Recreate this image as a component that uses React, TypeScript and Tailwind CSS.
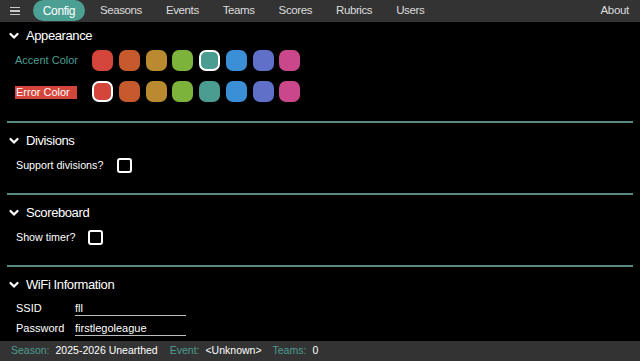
import React from "react";

const SW = ["#d4453b", "#c75a2d", "#b98a2f", "#7cb33b", "#4b9d91", "#3a8fd6", "#6070c9", "#c9478a"];

function Chevron() {
  return (
    <svg width="10" height="8" viewBox="0 0 10 8" className="shrink-0">
      <polyline points="1.5,2 5,5.6 8.5,2" fill="none" stroke="white" strokeWidth="2.2" strokeLinecap="round" strokeLinejoin="round" />
    </svg>
  );
}

function Header({ title, mt }: { title: string; mt: string }) {
  return (
    <div className={`flex items-center h-[18px] pl-[2px] gap-[7px] ${mt}`}>
      <Chevron />
      <span className="text-[13px] tracking-[-0.4px] text-white">{title}</span>
    </div>
  );
}

function Divider() {
  return <div className="mt-[18px] h-[2px] w-[626px] bg-[#5b8a80]" />;
}

function Swatches({ sel }: { sel: number }) {
  return (
    <div className="flex gap-[5.75px]">
      {SW.map((c, i) => (
        <div
          key={i}
          className={`w-[21px] h-[21px] rounded-[7px] ${i === sel ? "border-[2.5px] border-white" : ""}`}
          style={{ backgroundColor: c }}
        />
      ))}
    </div>
  );
}

function Check() {
  return <div className="w-[15px] h-[15px] rounded-[3px] border-2 border-white" />;
}

export default function App() {
  const nav = ["Seasons", "Events", "Teams", "Scores", "Rubrics", "Users"];
  return (
    <div className="flex flex-col h-[361px] w-[640px] bg-black overflow-hidden" style={{ fontFamily: '"Liberation Sans", Arial, sans-serif' }}>
      <nav className="flex items-center h-[22px] bg-[#333333] shrink-0">
        <div className="ml-[10px] w-[10px] flex flex-col gap-[2px]">
          <div className="h-[1.5px] bg-[#c8c8c8]" />
          <div className="h-[1.5px] bg-[#c8c8c8]" />
          <div className="h-[1.5px] bg-[#c8c8c8]" />
        </div>
        <div className="ml-[13px] h-[21px] w-[52px] self-start rounded-full bg-[#4c9f93] flex items-center justify-center text-white text-[12px] tracking-[-0.4px]">
          Config
        </div>
        <div className="flex ml-[15px] gap-[24px] text-[11.5px] tracking-[-0.4px] text-[#dcdcdc]">
          {nav.map((n) => (
            <span key={n}>{n}</span>
          ))}
        </div>
        <span className="ml-auto mr-[11px] text-[11.5px] tracking-[-0.3px] text-[#dcdcdc]">About</span>
      </nav>

      <main className="flex-1 px-[7px] overflow-hidden">
        <Header title="Appearance" mt="mt-[5px]" />
        <div className="flex items-center mt-[5px]">
          <span className="w-[85px] pl-[8px] text-[11px] text-[#4b9d91]">Accent Color</span>
          <Swatches sel={4} />
        </div>
        <div className="flex items-center mt-[8px]">
          <div className="w-[85px] pl-[8px]">
            <span className="inline-block w-[62px] bg-[#d4453b] text-white text-[11px] leading-[13px] pl-[1px]">Error Color</span>
          </div>
          <Swatches sel={0} />
        </div>
        <Divider />

        <Header title="Divisions" mt="mt-[9px]" />
        <div className="flex items-center h-[20px] mt-[5px] pl-[9px] gap-[14px]">
          <span className="text-[10.7px] text-white">Support divisions?</span>
          <Check />
        </div>
        <Divider />

        <Header title="Scoreboard" mt="mt-[9px]" />
        <div className="flex items-center h-[20px] mt-[5px] pl-[9px] gap-[13px]">
          <span className="text-[10.7px] text-white">Show timer?</span>
          <Check />
        </div>
        <Divider />

        <Header title="WiFi Information" mt="mt-[9px]" />
        <div className="flex items-center h-[20px] mt-[4px] pl-[9px]">
          <span className="w-[59px] text-[11px] text-white">SSID</span>
          <div className="w-[111px] h-[15px] border-b border-[#bdbdbd] text-[11px] text-white leading-[14px]">fll</div>
        </div>
        <div className="flex items-center h-[20px] mt-[0px] pl-[9px]">
          <span className="w-[59px] text-[11px] text-white">Password</span>
          <div className="w-[111px] h-[15px] border-b border-[#bdbdbd] text-[11px] text-white leading-[14px]">firstlegoleague</div>
        </div>
      </main>

      <footer className="flex items-center h-[20px] bg-[#333333] shrink-0 pl-[11px] text-[10.5px]">
        <span className="text-[#4b9d91]">Season:</span>
        <span className="ml-[6px] text-white">2025-2026 Unearthed</span>
        <span className="ml-[12px] text-[#4b9d91]">Event:</span>
        <span className="ml-[6px] text-white">&lt;Unknown&gt;</span>
        <span className="ml-[11px] text-[#4b9d91]">Teams:</span>
        <span className="ml-[6px] text-white">0</span>
      </footer>
    </div>
  );
}
